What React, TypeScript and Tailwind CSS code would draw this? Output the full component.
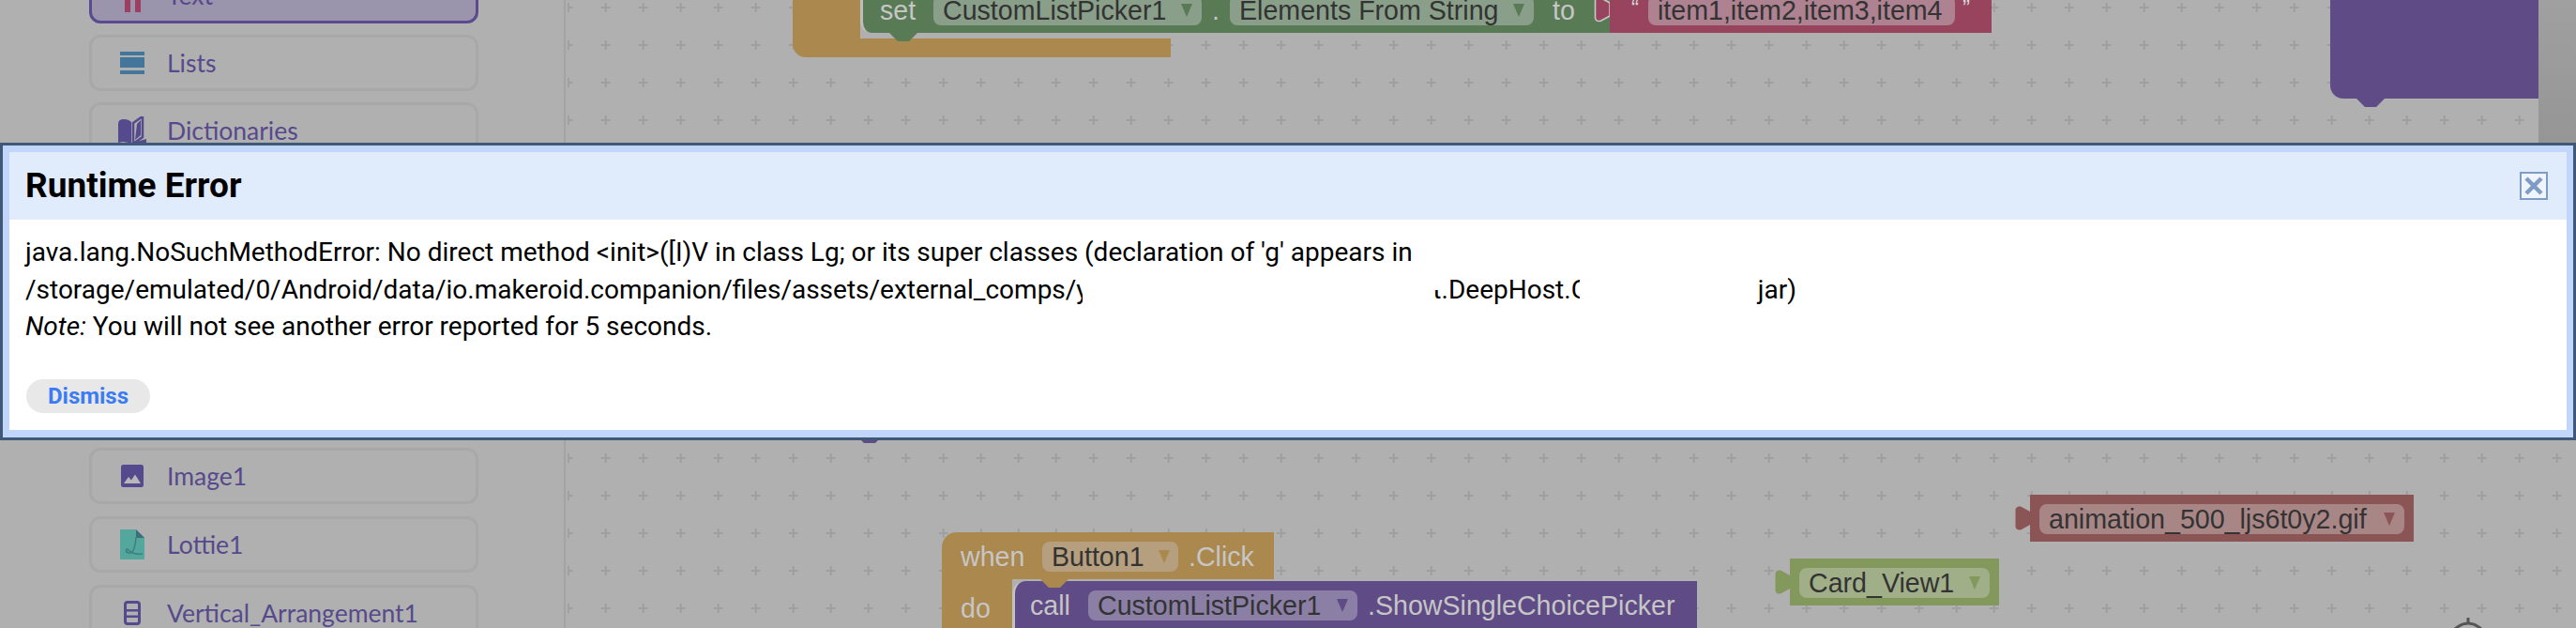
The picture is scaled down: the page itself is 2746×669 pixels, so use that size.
import React from "react";

const sans = "font-['Liberation_Sans',Arial,sans-serif]";

function Arrow({ c }: { c: string }) {
  return (
    <svg width="12" height="14" viewBox="0 0 12 14" className="ml-[15px] mr-[10px] shrink-0">
      <polygon points="0,0 12,0 6,14" fill={c} />
    </svg>
  );
}

function Field({ text, bg, arrow, w }: { text: string; bg: string; arrow: string; w: string }) {
  return (
    <div className={`flex items-center h-[32px] rounded-[8px] pl-[10px] shrink-0 text-[#333333] ${bg} ${w}`}>
      <span className="flex-1 whitespace-nowrap">{text}</span>
      <Arrow c={arrow} />
    </div>
  );
}

function Tab({ c, className, edge }: { c: string; className: string; edge?: boolean }) {
  return (
    <svg width="18" height="28" viewBox="-2 -1 18 28" className={`absolute ${className}`}>
      <path
        d="M16 6 L6 0.5 Q1 0 0.5 4 V22 Q1 26 6 25.5 L16 20 Z"
        fill={c}
        stroke={edge ? "#c8c8c8" : "none"}
        strokeWidth="1.6"
      />
    </svg>
  );
}

function Notch({ c, className }: { c: string; className: string }) {
  return (
    <svg width="30" height="9" viewBox="0 0 30 9" className={`absolute ${className}`}>
      <polygon points="0,0 30,0 21,9 9,9" fill={c} />
    </svg>
  );
}

function Card({ icon, label }: { icon: React.ReactNode; label: string }) {
  return (
    <div className="flex items-center h-[60px] w-[415px] rounded-[12px] border-[3px] border-[#a8a8a8] pl-[30px] shrink-0">
      <div className="w-[50px] shrink-0">{icon}</div>
      <span className="pt-[2px] text-[26.5px] text-[#564a8c] font-['Lato',sans-serif] whitespace-nowrap">{label}</span>
    </div>
  );
}

const ListsIcon = (
  <svg width="28" height="24" viewBox="0 0 28 24" className="ml-[-1px]">
    <rect x="1" y="0" width="26" height="4" fill="#44769c" />
    <rect x="1" y="6" width="26" height="11" fill="#44769c" />
    <rect x="1" y="20" width="26" height="4" fill="#44769c" />
  </svg>
);
const BookIcon = (
  <svg width="30" height="30" viewBox="0 0 30 30" className="ml-[-2px]">
    <path d="M0 8 Q0 3 6 3 Q11 3 14 6 V30 Q10 27 5 27 L0 28 Z" fill="#544a8d" />
    <path d="M16 7 L26 0 V22 L16 29 Z" fill="none" stroke="#544a8d" strokeWidth="2.5" />
    <path d="M20 8 L24 4 V20 L18 25 Z" fill="#544a8d" />
    <path d="M16 28 L30 24 V30 H16 Z" fill="#544a8d" />
  </svg>
);
const ImageIcon = (
  <svg width="24" height="24" viewBox="0 0 24 24" className="ml-[1px]">
    <rect x="0" y="0" width="24" height="24" rx="2.5" fill="#544a8d" />
    <path d="M3 20 L8 13 L11 16.5 L15 10.5 L21 20 Z" fill="#b8b8b8" />
  </svg>
);
const LottieIcon = (
  <svg width="26" height="32" viewBox="0 0 26 32">
    <path d="M0 0 H17 L26 9 V32 H0 Z" fill="#53a79c" />
    <path d="M17 0 L26 9 H17 Z" fill="#3e6f78" />
    <path d="M17 8 C16 20 14 26 9 25 C5 24 6 19 9 22 C12 25 17 27 24 26" fill="none" stroke="#3e7f80" strokeWidth="1.5" />
  </svg>
);
const VerticalIcon = (
  <svg width="18" height="26" viewBox="0 0 18 26" className="ml-[4px]">
    <rect x="1.5" y="1.5" width="15" height="23" rx="2.5" fill="none" stroke="#544a8d" strokeWidth="3" />
    <rect x="1.5" y="9" width="15" height="2.5" fill="#544a8d" />
    <rect x="1.5" y="15.5" width="15" height="2.5" fill="#544a8d" />
  </svg>
);

export default function App() {
  return (
    <div className="relative flex w-[2746px] h-[669px] overflow-hidden bg-[#b0b0b0]">
      {/* sidebar */}
      <aside className="flex flex-col w-[603px] h-full shrink-0 border-r-2 border-[#a3a3a3] pl-[95px] overflow-hidden">
        <div className="flex flex-col gap-[12px] mt-[-35px]">
          <div className="relative flex items-center h-[60px] w-[415px] rounded-[12px] border-[3px] border-[#5b4a90] bg-[#9a94ad] pl-[30px] shrink-0">
            <div className="w-[50px] shrink-0">
              <svg width="18" height="36" viewBox="0 0 18 36" className="ml-[5px]">
                <rect x="0" y="0" width="6" height="36" fill="#9c3f60" />
                <rect x="11" y="0" width="6" height="36" fill="#9c3f60" />
              </svg>
            </div>
            <span className="pt-[2px] text-[26.5px] text-[#564a8c] font-['Lato',sans-serif]">Text</span>
          </div>
          <Card icon={ListsIcon} label="Lists" />
          <Card icon={BookIcon} label="Dictionaries" />
        </div>
        <div className="flex flex-col gap-[13px] mt-[308px]">
          <Card icon={ImageIcon} label="Image1" />
          <Card icon={LottieIcon} label="Lottie1" />
          <Card icon={VerticalIcon} label="Vertical_Arrangement1" />
        </div>
      </aside>

      {/* blocks canvas */}
      <main className={`relative flex-1 h-full overflow-hidden text-[28.6px] leading-none ${sans}`}>
        <svg className="absolute left-[2px] top-0 w-[2141px] h-[669px]">
          <defs>
            <pattern id="grid" x="-19.2" y="-12" width="40" height="40" patternUnits="userSpaceOnUse">
              <path d="M15 20 H25 M20 15 V25" stroke="#9f9f9f" strokeWidth="2" />
            </pattern>
          </defs>
          <rect width="100%" height="100%" fill="url(#grid)" />
        </svg>

        {/* right panel */}
        <div className="absolute right-0 top-0 w-[40px] h-[200px] bg-gradient-to-b from-[#a0a0a0] to-[#929292]" />

        {/* orange holder top */}
        <div className="absolute left-[242px] top-[-20px] flex flex-col">
          <div className="w-[72px] h-[61px] bg-[#ab884e]" />
          <div className="w-[403px] h-[20px] bg-[#ab884e] rounded-bl-[14px]" />
        </div>

        {/* set block */}
        <div className="absolute left-[314px] top-[-15px] flex items-center w-[799px] h-[50px] pt-[2px] pl-[18px] bg-[#587a55] border-l-[3px] border-[#bdbdbd] rounded-bl-[12px] text-[#c6c6c6]">
          <span className="w-[57px] shrink-0">set</span>
          <Field text="CustomListPicker1" bg="bg-[#8a9f89]" arrow="#587a55" w="w-[286px]" />
          <span className="w-[30px] text-center shrink-0">.</span>
          <Field text="Elements From String" bg="bg-[#8a9f89]" arrow="#587a55" w="w-[324px]" />
          <span className="ml-[20px] shrink-0">to</span>
        </div>
        <Notch c="#587a55" className="left-[345px] top-[35px]" />

        {/* text block */}
        <div className="absolute left-[1113px] top-[-15px] flex items-center w-[407px] h-[50px] pt-[2px] pl-[23px] bg-[#98445f] text-[#d6d6d6]">
          <span className="w-[18px] shrink-0 text-[24px] mt-[-4px]">“</span>
          <div className="flex items-center h-[32px] w-[327px] rounded-[8px] pl-[10px] bg-[#ae8291] text-[#333333] shrink-0 whitespace-nowrap">
            item1,item2,item3,item4
          </div>
          <span className="ml-[8px] text-[24px] mt-[-4px]">”</span>
        </div>
        <Tab c="#98445f" edge className="left-[1095px] top-[-4px]" />

        {/* purple top right */}
        <div className="absolute left-[1881px] top-[-20px] w-[222px] h-[125px] bg-[#5f4b85] rounded-bl-[14px]" />
        <Notch c="#5f4b85" className="left-[1909px] top-[105px]" />

        {/* notch under dialog */}
        <Notch c="#5f4b85" className="left-[309px] top-[463px]" />

        {/* event block */}
        <div className="absolute left-[401px] top-[567px] flex flex-col text-[#c6c6c6]">
          <div className="flex items-center w-[354px] h-[50px] pt-[2px] pl-[20px] bg-[#ab884e] rounded-tl-[16px]">
            <span className="w-[87px] shrink-0">when</span>
            <div className="flex items-center h-[32px] w-[145px] rounded-[8px] pl-[10px] bg-[#b69f7e] text-[#333333] shrink-0">
              <span className="flex-1">Button1</span>
              <Arrow c="#ab884e" />
            </div>
            <span className="ml-[11px]">.Click</span>
          </div>
          <div className="flex w-[805px] h-[60px]">
            <div className="flex items-center w-[75px] h-[60px] pl-[20px] pt-[2px] bg-[#ab884e] shrink-0">do</div>
            <div className="flex items-center w-[730px] h-[58px] mt-[2px] pb-[6px] pl-[16px] bg-[#5f4b85] border-l-[3px] border-[#c2c2c2] rounded-tl-[14px]">
              <span className="w-[62px] shrink-0">call</span>
              <Field text="CustomListPicker1" bg="bg-[#8b7fa6]" arrow="#5f4b85" w="w-[287px]" />
              <span className="ml-[11px] whitespace-nowrap">.ShowSingleChoicePicker</span>
            </div>
          </div>
          <Notch c="#ab884e" className="left-[105px] top-[50px]" />
        </div>

        {/* filename block */}
        <div className="absolute left-[1561px] top-[527px] flex items-center w-[409px] h-[50px] pt-[2px] pl-[10px] bg-[#8c5555]">
          <Field text="animation_500_ljs6t0y2.gif" bg="bg-[#a98686]" arrow="#8c5555" w="w-[389px]" />
        </div>
        <Tab c="#8c5555" className="left-[1543px] top-[538px]" />

        {/* card view block */}
        <div className="absolute left-[1305px] top-[595px] flex items-center w-[223px] h-[50px] pt-[2px] pl-[10px] bg-[#82985c]">
          <Field text="Card_View1" bg="bg-[#a0af88]" arrow="#82985c" w="w-[203px]" />
        </div>
        <Tab c="#82985c" className="left-[1287px] top-[606px]" />

        {/* zoom control peeking */}
        <svg width="32" height="12" viewBox="0 0 32 12" className="absolute left-[2012px] top-[658px]">
          <path d="M16 0 V7" stroke="#555555" strokeWidth="3" />
          <path d="M2 12 Q16 0 30 12" fill="none" stroke="#555555" strokeWidth="3" />
        </svg>
      </main>

      {/* error dialog */}
      <section className="absolute left-0 top-[152px] flex flex-col w-[2746px] h-[317px] border-[3px] border-[#3f5878] bg-[#c2d6fb] px-[7px] pt-[7px] pb-[8px] font-['Roboto',sans-serif]">
        <header className="flex items-center justify-between h-[72px] shrink-0 bg-[#e0ebfc] pl-[17px] pr-[20px]">
          <h1 className="pb-[2px] text-[37px] font-bold text-black leading-none">Runtime Error</h1>
          <button className="flex items-center justify-center w-[30px] h-[30px] border-2 border-[#7f9cc6] bg-[#f0f4fd]">
            <svg width="20" height="20" viewBox="0 0 20 20">
              <path d="M2 2 L18 18 M18 2 L2 18" stroke="#7f9cc6" strokeWidth="4.5" />
            </svg>
          </button>
        </header>
        <div className="flex-1 bg-white pl-[17px] pt-[15px] text-[28px] leading-[39.5px] text-black">
          <p className="whitespace-nowrap">java.lang.NoSuchMethodError: No direct method &lt;init&gt;([I)V in class Lg; or its super classes (declaration of 'g' appears in</p>
          <p className="whitespace-nowrap flex">
            <span>/storage/emulated/0/Android/data/io.makeroid.companion/files/assets/external_comps/</span>
            <span className="w-[7px] overflow-hidden shrink-0">y</span>
            <span className="w-[373px] shrink-0" />
            <span className="relative">
              t.DeepHost.C
              <span className="absolute left-[-2px] top-[4px] w-[21px] h-[16px] bg-white" />
              <span className="absolute right-0 top-0 w-[9px] h-full bg-white" />
            </span>
            <span className="w-[181px] shrink-0" />
            <span>jar)</span>
          </p>
          <p className="whitespace-nowrap"><em>Note:</em> You will not see another error reported for 5 seconds.</p>
          <button className="flex items-center justify-center mt-[36px] ml-[1px] w-[132px] h-[36px] rounded-full bg-[#e8e8e8] text-[24px] leading-none font-bold text-[#3b7cf5]">Dismiss</button>
        </div>
      </section>
    </div>
  );
}
